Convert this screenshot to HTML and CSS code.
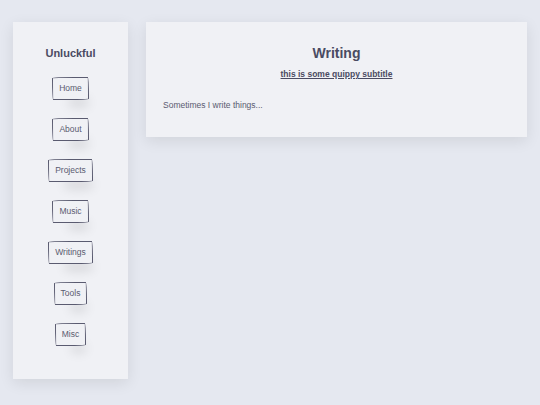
FILE: index.html
```html
<!DOCTYPE html>
<html lang="en">
<head>
    <meta charset="UTF-8">
    <meta name="viewport" content="width=device-width, initial-scale=1.0">
    <title>Unluckful - Writing</title>
    <link rel="stylesheet" href="styles.css">
</head>
<body>
    <div class="page">
        <nav class="sidebar">
            <h3 class="site-name">Unluckful</h3>
            <a class="sketch-btn" href="#">Home</a>
            <a class="sketch-btn" href="#">About</a>
            <a class="sketch-btn" href="#">Projects</a>
            <a class="sketch-btn" href="#">Music</a>
            <a class="sketch-btn" href="#">Writings</a>
            <a class="sketch-btn" href="#">Tools</a>
            <a class="sketch-btn" href="#">Misc</a>
        </nav>

        <main class="content">
            <h1 class="title">Writing</h1>
            <h5 class="subtitle"><a href="#">this is some quippy subtitle</a></h5>
            <p class="intro">Sometimes I write things...</p>
        </main>
    </div>
</body>
</html>
```

FILE: styles.css
```css
body {
    margin: 0;
    background: #e5e8f0;
    font-family: "Liberation Sans", Arial, sans-serif;
    color: #4a4b62;
}
.page {
    display: flex;
    align-items: flex-start;
    gap: 18px;
    padding: 22px 13px;
}
.sidebar {
    width: 115px;
    height: 357px;
    box-sizing: border-box;
    flex-shrink: 0;
    background: #f0f1f5;
    box-shadow: 0 4px 14px rgba(0, 0, 0, 0.09);
    display: flex;
    flex-direction: column;
    align-items: center;
    gap: 18px;
    padding-top: 24px;
}
.site-name {
    margin: 0 0 -1px;
    font-size: 11px;
    font-weight: bold;
    line-height: 14px;
}
.sketch-btn {
    display: block;
    padding: 5px 6px;
    font-size: 8.5px;
    line-height: 11px;
    color: #5a5b70;
    text-decoration: none;
    border: 1px solid #5a5b70;
    border-radius: 255px 15px 225px 15px / 15px 225px 15px 255px;
    box-shadow: 8px 14px 12px -9px rgba(0, 0, 0, 0.2);
    background: #f0f1f5;
}
.content {
    flex: 1;
    height: 115px;
    box-sizing: border-box;
    background: #f0f1f5;
    box-shadow: 0 4px 14px rgba(0, 0, 0, 0.09);
    padding: 23px 17px 0;
}
.title {
    margin: 0;
    text-align: center;
    font-size: 14px;
    line-height: 17px;
    font-weight: bold;
}
.subtitle {
    margin: 7px 0 0;
    text-align: center;
    font-size: 8.5px;
    line-height: 11px;
    font-weight: bold;
}
.subtitle a {
    color: #4a4b62;
}
.intro {
    margin: 20px 0 0;
    font-size: 8.5px;
    line-height: 11px;
    color: #5a5b70;
}
```
